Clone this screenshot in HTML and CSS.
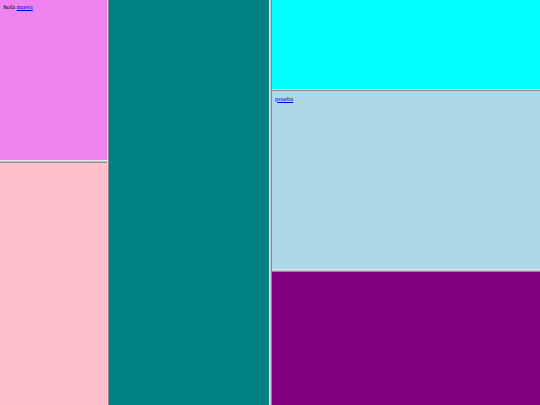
FILE: index.html
```html
<!DOCTYPE html>
<html>
<head>
<meta charset="utf-8">
<link rel="stylesheet" href="styles.css">
</head>
<body>
<div class="col col-left">
  <div class="pane violet top-left"><span>hola</span> <a href="#">nueva</a></div>
  <div class="hbar"></div>
  <div class="pane pink fill"></div>
</div>
<div class="vbar"></div>
<div class="col col-mid">
  <div class="pane teal fill"></div>
</div>
<div class="vbar"></div>
<div class="col col-right">
  <div class="pane aqua top-right"></div>
  <div class="hbar"></div>
  <div class="pane lightblue mid-right"><a href="#">prueba</a></div>
  <div class="hbar"></div>
  <div class="pane purple fill"></div>
</div>
</body>
</html>
```
FILE: styles.css
```css
html, body {
  margin: 0;
  padding: 0;
}
body {
  width: 540px;
  height: 405px;
  display: flex;
  overflow: hidden;
  font-family: "Liberation Serif", serif;
  font-size: 6.75px;
  color: #000;
}
.col {
  display: flex;
  flex-direction: column;
  height: 405px;
}
.col-left { width: 106.5px; }
.col-mid { width: 160px; }
.col-right { flex: 1; }
.pane {
  box-sizing: border-box;
  padding: 3.4px;
  overflow: hidden;
}
.fill { flex: 1; }
.top-left { height: 160.3px; }
.top-right { height: 88.9px; }
.mid-right { height: 177.8px; }
.violet { background: #ee82ee; }
.pink { background: #ffc0cb; }
.teal { background: #008080; }
.aqua { background: #00ffff; }
.lightblue { background: #add8e6; }
.purple { background: #800080; }
a { color: #0000ee; text-decoration: underline; }
.vbar {
  width: 2.5px;
  flex: none;
  background: linear-gradient(to right, #e6e6e6 0 30%, #c4c4c4 30% 65%, #8c8c8c 65%);
}
.hbar {
  height: 2.5px;
  flex: none;
  background: linear-gradient(to bottom, #e6e6e6 0 30%, #c4c4c4 30% 65%, #8c8c8c 65%);
}
```
